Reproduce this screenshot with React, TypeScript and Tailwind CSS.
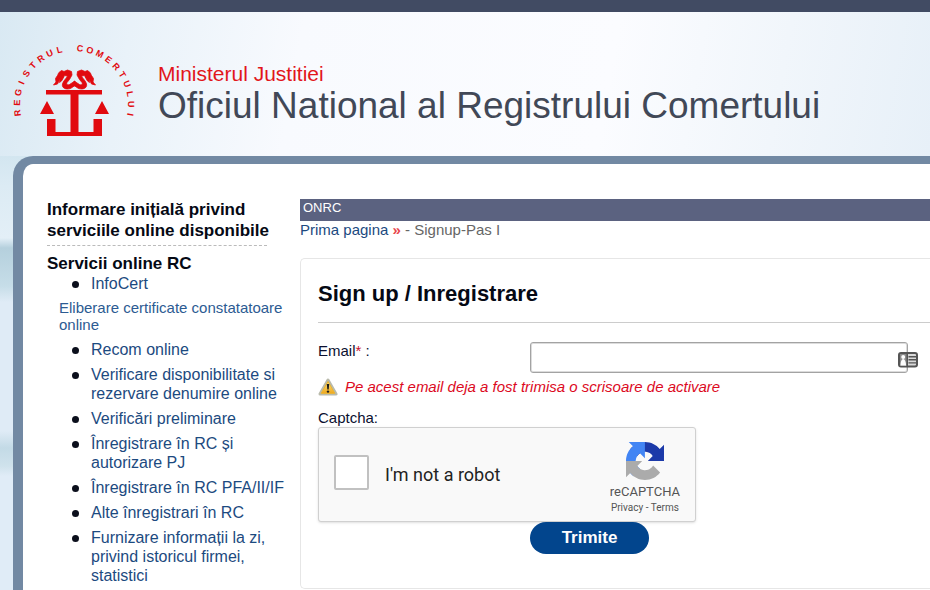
const services = [
  "Recom online",
  "Verificare disponibilitate si rezervare denumire online",
  "Verificări preliminare",
  "Înregistrare în RC și autorizare PJ",
  "Înregistrare în RC PFA/II/IF",
  "Alte înregistrari în RC",
  "Furnizare informații la zi, privind istoricul firmei, statistici",
]

function Dragon() {
  return (
    <g fill="#e10a0f" stroke="#e10a0f" strokeLinejoin="round" strokeLinecap="round">
      <path
        d="M49 28.500L51.500 26.500L54 27.500L57.500 26L61.500 27.500L62 31L59.500 35.500L57 38.500C56 40.500 57.500 41.500 59.500 40.500L65 37V41.500L60.500 44.500C56 46 51.500 44 52.500 40C53 37 56.500 34.500 57.500 32L54.500 31.500L53 34.500L51.500 37L49.500 38.500L50 35L47.500 40L43.500 41L46 38L45.500 34.500L47.500 31.500Z"
        strokeWidth=".8"
      />
    </g>
  )
}

function Logo() {
  return (
    <svg viewBox="0 0 128 100" className="h-[100px] w-32 shrink-0" role="img" aria-label="Registrul Comertului">
      <g fill="#e10a0f" fontFamily="Liberation Sans, Arial, sans-serif" fontSize="9" fontWeight="700" textAnchor="middle">
        {"REGISTRUL COMERTULUI".split("").map((letter, i) => (
          <text key={i} x="64" y="7" transform={`rotate(${-98 + i * 10.4} 64 61)`}>
            {letter}
          </text>
        ))}
      </g>
      <Dragon />
      <g transform="translate(129 0) scale(-1 1)">
        <Dragon />
      </g>
      <path
        fill="#e10a0f"
        d="M36 46H92V50.500H68.500V88H83.500V75H92V92H37V75H45.500V88H60.500V50.500H36Z M37 57L44 70H30Z M92 57L99 70H85Z"
      />
    </svg>
  )
}

function Header() {
  return (
    <header className="flex h-36 items-start bg-[linear-gradient(100deg,#d9e9f3_0%,#e9f2f9_14%,#f8fafe_32%,#fbfcff_65%,#f1f6fb_83%,#e7f0f8_100%)] pt-8 pl-[10px]">
      <Logo />
      <div className="pt-[18px] pl-5 whitespace-nowrap">
        <p className="text-[21px] leading-6 text-[#e2161b]">Ministerul Justitiei</p>
        <h1 className="text-[37px] leading-10 text-[#414857]">Oficiul National al Registrului Comertului</h1>
      </div>
    </header>
  )
}

function ServiceItem({ label }: { label: string }) {
  return (
    <li className="flex gap-3 pl-[25px]">
      <span className="mt-[7px] size-[7px] shrink-0 rounded-full bg-[#0b0f1c]" />
      <a href="#" className="text-base leading-[19px] text-[#1c4a80]">
        {label}
      </a>
    </li>
  )
}

function Sidebar() {
  return (
    <nav className="w-[253px] shrink-0 pr-2">
      <h2 className="max-w-[232px] text-[17px] leading-[21px] font-bold text-[#050914]">
        Informare inițială privind serviciile online disponibile
      </h2>
      <hr className="mt-1 w-[220px] border-t border-dashed border-[#bbbbbb]" />
      <h2 className="mt-[7px] text-[17px] leading-[21px] font-bold text-[#050914]">Servicii online RC</h2>
      <ul className="flex flex-col gap-[6px]">
        <ServiceItem label="InfoCert" />
        <li className="pb-px pl-3 text-[15px] leading-[17px]">
          <a href="#" className="text-[#2c5b92]">
            Eliberare certificate constatatoare online
          </a>
        </li>
        {services.map((label) => (
          <ServiceItem key={label} label={label} />
        ))}
      </ul>
    </nav>
  )
}

function WarningIcon() {
  return (
    <svg viewBox="0 0 20 18" className="h-[18px] w-5 shrink-0" aria-hidden="true">
      <defs>
        <linearGradient id="warning" x1="0" y1="0" x2="0" y2="1">
          <stop offset="0" stopColor="#f7e58a" />
          <stop offset="1" stopColor="#f0a81c" />
        </linearGradient>
      </defs>
      <path d="M10 2L18 16H2Z" fill="#e9e9e4" stroke="#b9baab" strokeWidth="3" strokeLinejoin="round" />
      <path d="M10 3.500L16.800 15.300H3.200Z" fill="url(#warning)" stroke="#efb42b" strokeLinejoin="round" />
      <path d="M8.800 6H11.200L10.700 11.500H9.300Z" fill="#1c1c1c" />
      <circle cx="10" cy="13.600" r="1.200" fill="#1c1c1c" />
    </svg>
  )
}

function ContactCardIcon() {
  return (
    <svg viewBox="0 0 20 16" className="absolute top-[10px] -right-[10px] h-4 w-5" aria-hidden="true">
      <rect x="1" y="1" width="18" height="13.500" rx="2" fill="#d9d9d9" stroke="#555" strokeWidth="2" />
      <rect x="2" y="2" width="7" height="11.500" fill="#8a8a8a" />
      <rect x="8.500" y="1" width="1.500" height="13.500" fill="#555" />
      <circle cx="5.200" cy="5" r="2" fill="#fff" />
      <path d="M2.500 13.500C2.500 10 3.500 7 5.200 7S8 10 8 13.500Z" fill="#fff" />
      <path d="M10.500 4.700H18M10.500 7.800H18M10.500 10.900H18" stroke="#555" strokeWidth="1.400" />
    </svg>
  )
}

function RecaptchaLogo() {
  return (
    <svg viewBox="0 0 64 64" className="size-[38px]" aria-hidden="true">
      <path
        fill="#1c3aa9"
        d="M64 31.955l-.033-1.370V4.687l-7.160 7.160C50.948 4.674 42.033.093 32.050.093c-10.400 0-19.622 4.960-25.458 12.640l11.736 11.860a15.550 15.550 0 0 1 4.754-5.334c2.050-1.600 4.952-2.906 8.968-2.906.485 0 .860.057 1.135.163 4.976.393 9.288 3.140 11.828 7.124l-8.307 8.307L64 31.953"
      />
      <path
        fill="#4285f4"
        d="M31.862.094l-1.370.033H4.594l7.160 7.160C4.580 13.147 0 22.060 0 32.046c0 10.400 4.960 19.622 12.640 25.458L24.500 45.768a15.550 15.550 0 0 1-5.334-4.754c-1.600-2.050-2.906-4.952-2.906-8.968 0-.485.057-.860.163-1.135.393-4.976 3.140-9.288 7.124-11.828l8.307 8.307L31.860.095"
      />
      <path
        fill="#ababab"
        d="M.001 32.045l.033 1.370v25.898l7.160-7.160c5.860 7.173 14.774 11.754 24.760 11.754 10.400 0 19.622-4.960 25.458-12.640l-11.736-11.860a15.550 15.550 0 0 1-4.754 5.334c-2.050 1.600-4.952 2.906-8.968 2.906-.485 0-.860-.057-1.135-.163-4.976-.393-9.288-3.140-11.828-7.124l8.307-8.307c-10.522.040-22.400.066-27.295-.005"
      />
    </svg>
  )
}

function Captcha() {
  return (
    <div className="flex h-[95px] w-[378px] items-center rounded-[3px] border border-[#d0d0d0] bg-[#f9f9f9] px-[15px] font-[Roboto,sans-serif] shadow-sm">
      <input
        id="robot"
        type="checkbox"
        className="mb-1 size-[35px] appearance-none rounded-[2px] border-2 border-[#c1c1c1] bg-white"
      />
      <label htmlFor="robot" className="pl-4 text-lg leading-6 text-[#222222]">
        I'm not a robot
      </label>
      <div className="ml-auto flex flex-col items-center pt-2 text-[#555555]">
        <RecaptchaLogo />
        <span className="mt-1 text-[13px] leading-4">reCAPTCHA</span>
        <span className="text-[10px] leading-4">
          <a href="#">Privacy</a> - <a href="#">Terms</a>
        </span>
      </div>
    </div>
  )
}

function SignupForm() {
  return (
    <form className="rounded-l-[5px] border border-r-0 border-[#e6e6e6] pt-[21px] pb-[34px] pl-[17px] text-[15px] leading-[18px] text-[#0b1030]">
      <h2 className="text-[22px] leading-7 font-bold text-[#050914]">Sign up / Inregistrare</h2>
      <hr className="mt-[14px] border-t border-[#cccccc]" />
      <div className="mt-[19px] flex items-start">
        <label htmlFor="email" className="w-[212px] shrink-0">
          Email<span className="text-[#c8102e]">*</span> :
        </label>
        <div className="relative">
          <input
            id="email"
            type="email"
            className="block h-[31px] w-[378px] rounded-[3px] border border-[#a3a3a3] bg-white px-2 shadow-[inset_0_0_0_1px_#dcdcdc] outline-none"
          />
          <ContactCardIcon />
        </div>
      </div>
      <p className="mt-[5px] flex items-center gap-[7px] text-[#dc0a1e] italic">
        <WarningIcon />
        Pe acest email deja a fost trimisa o scrisoare de activare
      </p>
      <p className="mt-[13px]">Captcha:</p>
      <Captcha />
      <button type="button" className="ml-[212px] block h-8 w-[119px] rounded-full bg-[#02458d] text-[17px] font-bold text-white">
        Trimite
      </button>
    </form>
  )
}

export default function App() {
  return (
    <div className="flex min-h-screen flex-col overflow-x-hidden bg-white font-['Liberation_Sans',Arial,sans-serif]">
      <div className="h-3 bg-[#414b63]" />
      <Header />
      <div className="flex grow flex-col bg-[linear-gradient(180deg,#d3e6f0_0px,#dcebf4_30px,#e3eff7_82px,#b5d0dd_92px,#c6dde8_130px,#dfebf6_146px,#dfebf6_275px,#c3dae6_292px,#cfe2ec_310px,#e0ecf7_320px)] pl-[13px]">
        <main className="flex grow rounded-tl-[20px] border-t-8 border-l-[10px] border-[#7289a3] bg-white pt-[35px] pl-6">
          <Sidebar />
          <section className="min-w-0 grow">
            <div className="h-[22px] bg-[#5b6280] pl-[3px] text-[13px] leading-[18px] text-white">ONRC</div>
            <p className="text-[15px] leading-[18px] text-[#666666]">
              <a href="#" className="text-[#1c4a80]">
                Prima pagina
              </a>{" "}
              <span className="font-bold text-[#e8474c]">»</span> - Signup-Pas I
            </p>
            <div className="pt-[19px]">
              <SignupForm />
            </div>
          </section>
        </main>
      </div>
    </div>
  )
}
